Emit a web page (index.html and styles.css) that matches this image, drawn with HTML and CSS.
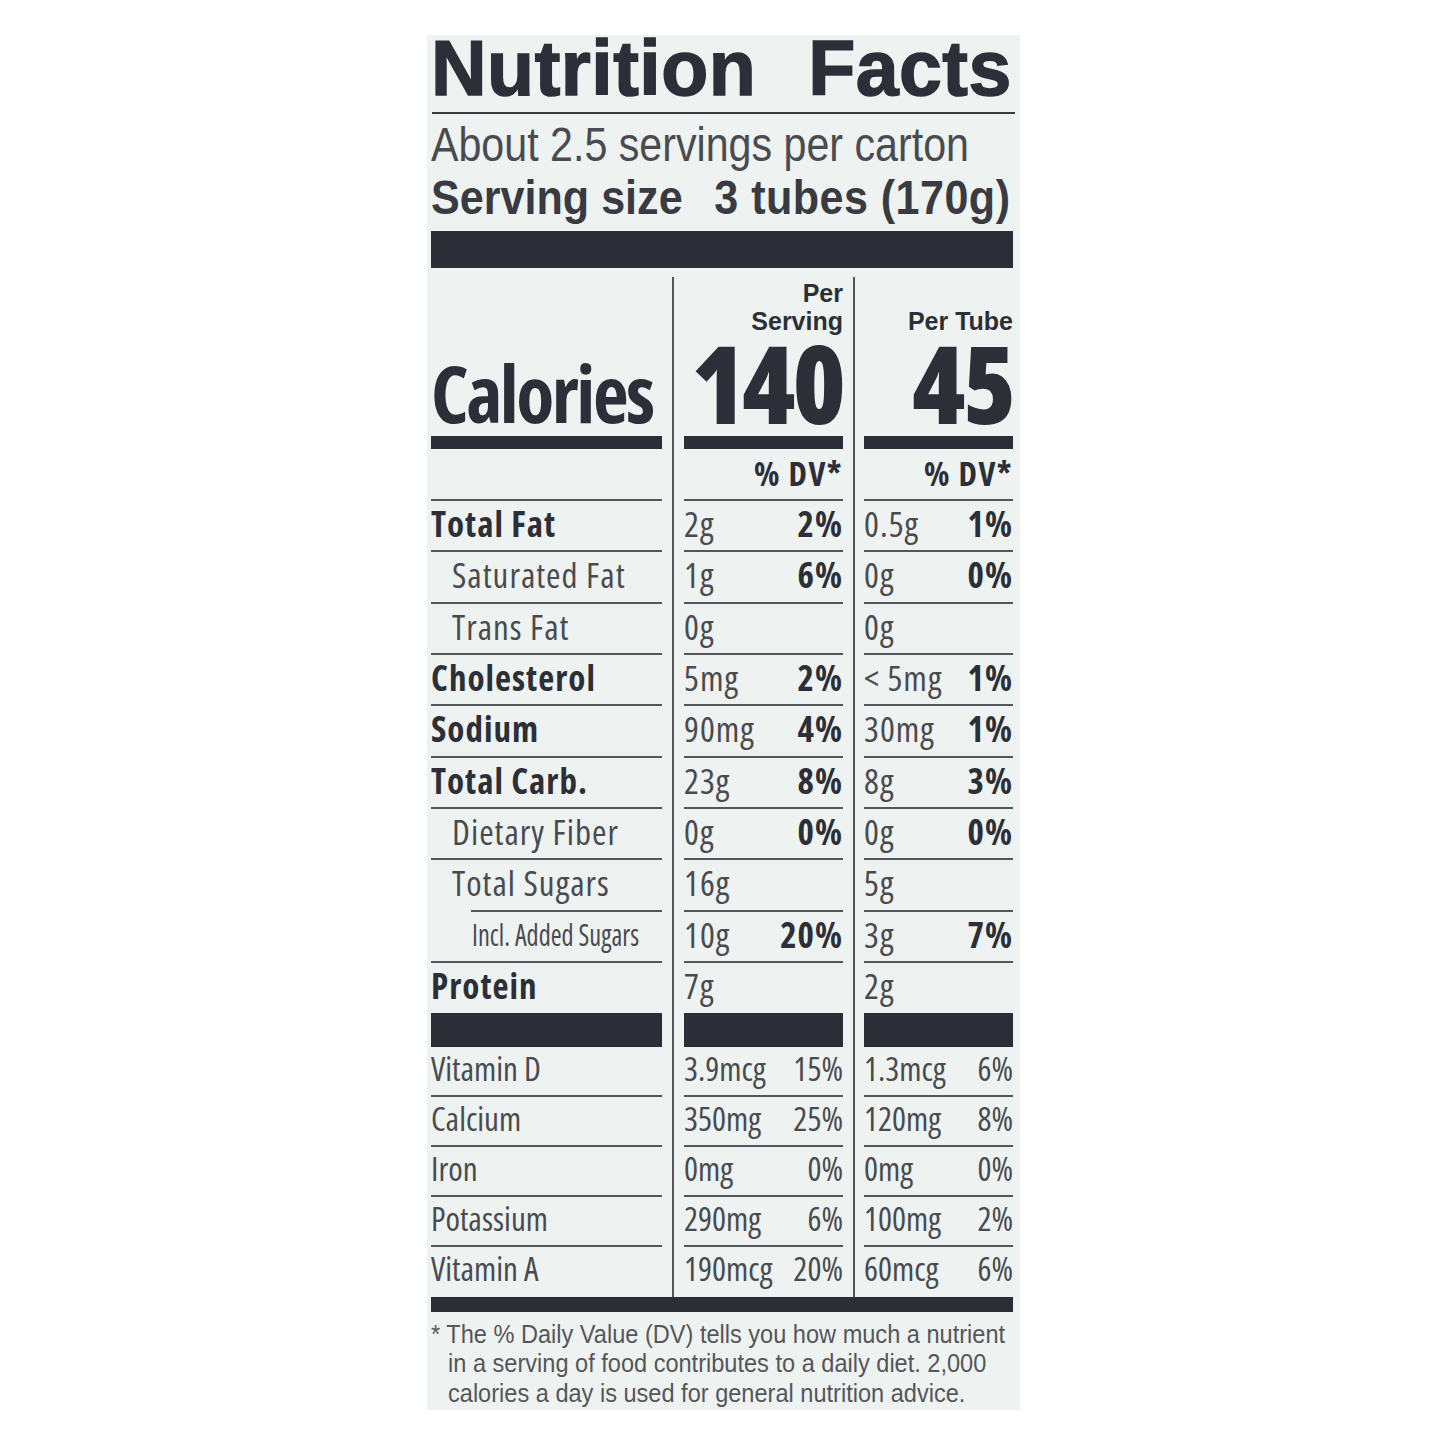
FILE: index.html
```html
<!DOCTYPE html>
<html lang="en">
<head>
<meta charset="utf-8">
<title>Nutrition Facts</title>
<link rel="stylesheet" href="styles.css">
</head>
<body>
<div class="label">
  <h1 class="title">Nutrition Facts</h1>
  <div class="rule"></div>
  <p class="servings">About 2.5 servings per carton</p>
  <p class="size"><span>Serving size</span><span class="size-val">3 tubes (170g)</span></p>
  <div class="topbar"></div>

  <div class="table">
    <div class="vline v1"></div>
    <div class="vline v2"></div>

    <div class="hcell c1"><span class="calories">Calories</span></div>
    <div class="hcell c3"><div class="per">Per<br>Serving</div><div class="big">140</div></div>
    <div class="hcell c5"><div class="per single">Per Tube</div><div class="big">45</div></div>

    <div class="dv c1"></div>
    <div class="dv c3">% DV*</div>
    <div class="dv c5">% DV*</div>

    <div class="row c1 b">Total Fat</div>
    <div class="row c3 val"><span>2g</span><span class="b">2%</span></div>
    <div class="row c5 val"><span>0.5g</span><span class="b">1%</span></div>

    <div class="row c1 sub">Saturated Fat</div>
    <div class="row c3 val"><span>1g</span><span class="b">6%</span></div>
    <div class="row c5 val"><span>0g</span><span class="b">0%</span></div>

    <div class="row c1 sub">Trans Fat</div>
    <div class="row c3 val"><span>0g</span><span></span></div>
    <div class="row c5 val"><span>0g</span><span></span></div>

    <div class="row c1 b">Cholesterol</div>
    <div class="row c3 val"><span>5mg</span><span class="b">2%</span></div>
    <div class="row c5 val"><span>&lt; 5mg</span><span class="b">1%</span></div>

    <div class="row c1 b">Sodium</div>
    <div class="row c3 val"><span>90mg</span><span class="b">4%</span></div>
    <div class="row c5 val"><span>30mg</span><span class="b">1%</span></div>

    <div class="row c1 b">Total Carb.</div>
    <div class="row c3 val"><span>23g</span><span class="b">8%</span></div>
    <div class="row c5 val"><span>8g</span><span class="b">3%</span></div>

    <div class="row c1 sub">Dietary Fiber</div>
    <div class="row c3 val"><span>0g</span><span class="b">0%</span></div>
    <div class="row c5 val"><span>0g</span><span class="b">0%</span></div>

    <div class="row c1 sugars">Total Sugars</div>
    <div class="row c3 val"><span>16g</span><span></span></div>
    <div class="row c5 val"><span>5g</span><span></span></div>

    <div class="row c1 added"><span class="added-txt">Incl. Added Sugars</span></div>
    <div class="row c3 val"><span>10g</span><span class="b">20%</span></div>
    <div class="row c5 val"><span>3g</span><span class="b">7%</span></div>

    <div class="row last c1 b">Protein</div>
    <div class="row last c3 val"><span>7g</span><span></span></div>
    <div class="row last c5 val"><span>2g</span><span></span></div>

    <div class="midbar c1"></div>
    <div class="midbar c3"></div>
    <div class="midbar c5"></div>

    <div class="vrow c1">Vitamin D</div>
    <div class="vrow c3 val"><span>3.9mcg</span><span>15%</span></div>
    <div class="vrow c5 val"><span>1.3mcg</span><span>6%</span></div>

    <div class="vrow c1">Calcium</div>
    <div class="vrow c3 val"><span>350mg</span><span>25%</span></div>
    <div class="vrow c5 val"><span>120mg</span><span>8%</span></div>

    <div class="vrow c1">Iron</div>
    <div class="vrow c3 val"><span>0mg</span><span>0%</span></div>
    <div class="vrow c5 val"><span>0mg</span><span>0%</span></div>

    <div class="vrow c1">Potassium</div>
    <div class="vrow c3 val"><span>290mg</span><span>6%</span></div>
    <div class="vrow c5 val"><span>100mg</span><span>2%</span></div>

    <div class="vrow last c1">Vitamin A</div>
    <div class="vrow last c3 val"><span>190mcg</span><span>20%</span></div>
    <div class="vrow last c5 val"><span>60mcg</span><span>6%</span></div>
  </div>

  <div class="bottombar"></div>
  <p class="foot">* The % Daily Value (DV) tells you how much a nutrient<br>in a serving of food contributes to a daily diet. 2,000<br>calories a day is used for general nutrition advice.</p>
</div>
</body>
</html>
```
FILE: styles.css
```css
* { box-sizing: border-box; margin: 0; padding: 0; }
html, body { background: #ffffff; }
body {
  font-family: "Open Sans", "Liberation Sans", sans-serif;
  font-stretch: 75%;
  color: #2d2f38;
}
.label {
  margin: 35px 0 0 427px;
  width: 593px;
  height: 1375px;
  background: #eef3f1;
  padding: 0 7px 0 4px;
}
.title {
  font-family: "Liberation Sans", Arial, sans-serif;
  font-stretch: normal;
  font-weight: 700;
  font-size: 77px;
  line-height: 66px;
  word-spacing: 30px;
  letter-spacing: 0.5px;
  white-space: nowrap;
  color: #2d2f38;
  -webkit-text-stroke: 1.5px #2d2f38;
}
.rule { height: 2px; background: #3a3b40; margin: 11px -2px 0 1px; }
.servings {
  margin-top: 11px;
  font-family: "Liberation Sans", Arial, sans-serif;
  font-stretch: normal;
  font-size: 48px;
  line-height: 40px;
  color: #4a4b50;
  white-space: nowrap;
  transform: scaleX(0.858);
  transform-origin: left center;
}
.size {
  margin-top: 12px;
  font-family: "Liberation Sans", Arial, sans-serif;
  font-stretch: normal;
  font-size: 49px;
  line-height: 40px;
  font-weight: 700;
  white-space: nowrap;
  color: #3a3b42;
  transform: scaleX(0.88);
  transform-origin: left center;
}
.size-val { margin-left: 36px; letter-spacing: 0.5px; }
.topbar { height: 37px; margin-top: 14px; background: #2b2d37; }

.table {
  display: grid;
  grid-template-columns: 231px 22px 159px 21px 149px;
  margin-top: 9px;
}
.vline { grid-row: 1 / 19; width: 2px; background: #55565a; justify-self: center; }
.v1 { grid-column: 2; }
.v2 { grid-column: 4; }
.c1 { grid-column: 1; }
.c3 { grid-column: 3; }
.c5 { grid-column: 5; }

.hcell {
  height: 172px;
  border-bottom: 13px solid #2b2d37;
  display: flex;
  flex-direction: column;
  justify-content: space-between;
  align-items: flex-end;
}
.hcell.c1 { justify-content: flex-end; align-items: flex-start; }
.calories {
  font-weight: 700;
  font-size: 78px;
  line-height: 78px;
  letter-spacing: -2.5px;
  padding-bottom: 4px;
}
.per {
  font-family: "Liberation Sans", Arial, sans-serif;
  font-stretch: normal;
  font-weight: 700;
  font-size: 25px;
  line-height: 28px;
  padding-top: 2px;
  text-align: right;
}
.per.single { padding-top: 30px; }
.big {
  font-weight: 800;
  font-size: 108px;
  line-height: 90px;
  letter-spacing: -3px;
  padding-bottom: 8px;
}

.dv {
  height: 52px;
  padding-top: 1px;
  border-bottom: 2px solid #55565a;
  font-weight: 700;
  font-size: 33px;
  line-height: 48px;
  letter-spacing: 1.5px;
  text-align: right;
}

.row {
  height: 51.33px;
  border-bottom: 2px solid #55565a;
  font-size: 35px;
  line-height: 45px;
  letter-spacing: 1px;
  color: #4a4b50;
  white-space: nowrap;
}
.row.last { height: 50px; border-bottom: 0; }
.b { font-weight: 700; color: #2d2f38; }
.sub { padding-left: 21px; }
.sugars { margin-left: 40px; text-indent: -19px; }
.added { padding-left: 41px; font-size: 31px; letter-spacing: 0; }
.added-txt { display: inline-block; transform: scaleX(0.85); transform-origin: left center; }
.val { display: flex; justify-content: space-between; }

.midbar { height: 34px; background: #2b2d37; }

.vrow {
  height: 50px;
  border-bottom: 2px solid #55565a;
  font-size: 33px;
  line-height: 44px;
  color: #4a4b50;
  white-space: nowrap;
}
.vrow.last { border-bottom: 0; }

.bottombar { height: 15px; background: #2b2d37; }
.foot {
  margin-top: 8px;
  font-family: "Liberation Sans", Arial, sans-serif;
  font-stretch: normal;
  font-size: 25.5px;
  line-height: 29.5px;
  color: #55565a;
  padding-left: 18.4px;
  text-indent: -18.4px;
  white-space: nowrap;
  transform: scaleX(0.924);
  transform-origin: left center;
}
```
